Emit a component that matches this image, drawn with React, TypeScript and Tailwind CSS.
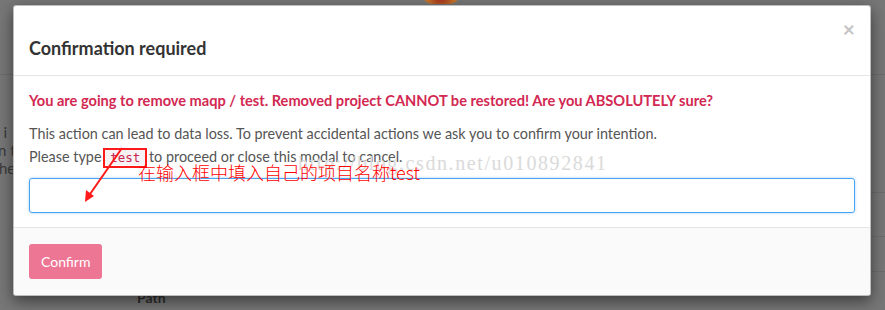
export default function App() {
  return (
    <div className="relative h-[310px] w-[885px] overflow-hidden bg-[#777777] font-['Lato','Noto_Sans',sans-serif]">
      {/* page behind the overlay */}
      <div className="absolute inset-0">
        <div className="h-[75px] border-b border-[#6c6c6c]" />
        <div className="pt-[48px] text-[15px] leading-[18px] text-[#3a3a3a]">
          <p className="-ml-[22px]">ork i</p>
          <p className="-ml-[2px]">n t</p>
          <p className="-ml-[1px]">he</p>
        </div>
        <div className="absolute left-[870px] right-0 top-[192px] border-b border-[#6c6c6c]" />
        <div className="absolute left-[870px] right-0 top-[236px] border-b border-[#6c6c6c]" />
        <div className="absolute left-[870px] right-0 top-[271px] border-b border-[#6c6c6c]" />
        <p className="absolute left-[137px] top-[287px] text-[14px] font-bold text-[#2e2e2e]">Path</p>
        <div className="absolute left-[423px] top-[-14px] h-[18px] w-[36px] rounded-full bg-[radial-gradient(circle,#a8321e_20%,#c4722a_70%)]" />
      </div>

      {/* modal */}
      <div className="absolute left-[13px] top-[5px] w-[858px] overflow-hidden rounded-[3px] border border-[#5c5c5c]/40 bg-white shadow-[0_5px_15px_rgba(0,0,0,0.5)]">
        <div className="flex h-[70px] items-start justify-between border-b border-[#e5e5e5] px-[15px]">
          <h4 className="pt-[31px] text-[18px] font-bold leading-[22px] text-[#333333]">Confirmation required</h4>
          <span className="pt-[12px] text-[21px] font-bold leading-none text-[#c4c4c4]">×</span>
        </div>

        <div className="relative px-[15px] pb-[14px] pt-[15px]">
          <p className="text-[14.6px] font-bold leading-[20px] text-[#d22852]">
            You are going to remove maqp / test. Removed project CANNOT be restored! Are you ABSOLUTELY sure?
          </p>
          <p className="mt-[11px] text-[14.4px] leading-[23px] text-[#555555]">
            This action can lead to data loss. To prevent accidental actions we ask you to confirm your intention.
            <br />
            Please type{" "}
            <code className="relative rounded-[2px] bg-[#f7f2f4] px-[5px] font-['DejaVu_Sans_Mono',monospace] text-[12.5px] text-[#c7254e]">
              test
              <span className="absolute -left-[2px] -right-[2px] -top-[2px] -bottom-[3px] border-2 border-[#ff1a1a]" />
            </code>{" "}
            to proceed or close this modal to cancel.
          </p>
          <div className="mt-[9px] h-[35px] rounded-[3px] border border-[#4aa3f0] shadow-[0_0_3px_rgba(80,160,240,0.5)]" />

          {/* annotation and watermark */}
          <p className="pointer-events-none absolute left-[284px] top-[72px] font-['Liberation_Serif',serif] text-[20px] tracking-[1.6px] text-[#dadada]">
            http://blog.csdn.net/u010892841
          </p>
          <p className="absolute left-[124px] top-[85px] font-['Noto_Sans_CJK_SC',sans-serif] text-[18px] font-light leading-[22px] text-[#ff0000]">
            在输入框中填入自己的项目名称test
          </p>
          <svg className="absolute left-[66px] top-[70px]" width="50" height="60" viewBox="0 0 50 60">
            <line x1="42" y1="2" x2="8" y2="51" stroke="#ff1a1a" strokeWidth="2" />
            <polygon points="5,56 6,44 14,50" fill="#ff1a1a" />
          </svg>
        </div>

        <div className="border-t border-[#e5e5e5] bg-[#fafafa] px-[15px] pb-[16px] pt-[16px]">
          <button className="h-[35px] rounded-[3px] bg-[#ed7694] px-[12px] text-[14px] text-white">Confirm</button>
        </div>
      </div>
    </div>
  );
}
